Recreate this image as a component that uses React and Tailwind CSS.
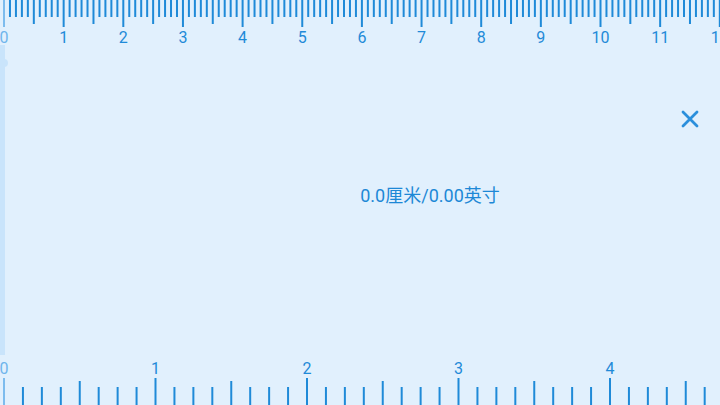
import React from 'react';

const CM = 59.65;
const INCH = 151.5;
const TICK = '#1f8ad8';
const NUM_FONT = { fontFamily: 'Roboto, "Noto Sans", sans-serif' };

const cmTicks = Array.from({ length: 122 }, (_, i) => i);
const inchTicks = Array.from({ length: 38 }, (_, i) => i);

function TopRuler() {
    return (
        <div className="relative h-[50px] w-full shrink-0">
            <svg width="720" height="28" className="block">
                {cmTicks.map(i => {
                    const x = 4 + (i * CM) / 10;
                    const len = i % 10 === 0 ? 27 : i % 5 === 0 ? 24 : 17;
                    return <rect key={i} x={x - 1} y={0} width={2} height={len} fill={i === 0 ? '#7dbcee' : TICK} />;
                })}
            </svg>
            {/* cm labels sit under their tick */}
            {Array.from({ length: 13 }, (_, i) => (
                <span key={i}
                    className="absolute top-[28px] -translate-x-1/2 text-[16px] leading-[20px]"
                    style={{ ...NUM_FONT, left: 4 + i * CM, color: i === 0 ? '#6fb5ec' : TICK }}>
                    {i}
                </span>
            ))}
        </div>
    );
}

function BottomRuler() {
    return (
        <div className="relative h-[46px] w-full shrink-0">
            {Array.from({ length: 5 }, (_, i) => (
                <span key={i}
                    className="absolute top-0 -translate-x-1/2 text-[16px] leading-[20px]"
                    style={{ ...NUM_FONT, left: 4 + i * INCH, color: i === 0 ? '#6fb5ec' : TICK }}>
                    {i}
                </span>
            ))}
            <svg width="720" height="27" className="absolute bottom-0 left-0">
                {inchTicks.map(j => {
                    const x = 4 + (j * INCH) / 8;
                    const len = j % 8 === 0 ? 27 : j % 4 === 0 ? 24 : 18;
                    return <rect key={j} x={x - 1} y={27 - len} width={2} height={len} fill={j === 0 ? '#7dbcee' : TICK} />;
                })}
            </svg>
        </div>
    );
}

export default function App() {
    return (
        <div className="relative flex h-[405px] w-[720px] flex-col overflow-hidden bg-[#e1f0fd]">
            <TopRuler />

            <div className="relative flex flex-1 items-center justify-center pb-[17px] pl-[140px]">
                {/* slider strip on the left edge */}
                <div className="absolute left-0 top-[-5px] bottom-[4px] w-[5px] bg-[#c9e4fb]" />
                <div className="absolute left-0 top-[9px] h-[8px] w-[8px] rounded-full bg-[#c9e4fb]" />

                <button className="absolute right-[20px] top-[59px] flex h-[20px] w-[20px] items-center justify-center">
                    <svg width="18" height="18" viewBox="0 0 18 18">
                        <path d="M2 2 L16 16 M16 2 L2 16" stroke="#2a8fdc" strokeWidth="2.8" strokeLinecap="round" />
                    </svg>
                </button>

                <p className="text-[18px] leading-[22px] text-[#1d88d6]" style={{ fontFamily: 'Roboto, "Noto Sans CJK SC", sans-serif' }}>
                    0.0厘米/0.00英寸
                </p>
            </div>

            <BottomRuler />
        </div>
    );
}
